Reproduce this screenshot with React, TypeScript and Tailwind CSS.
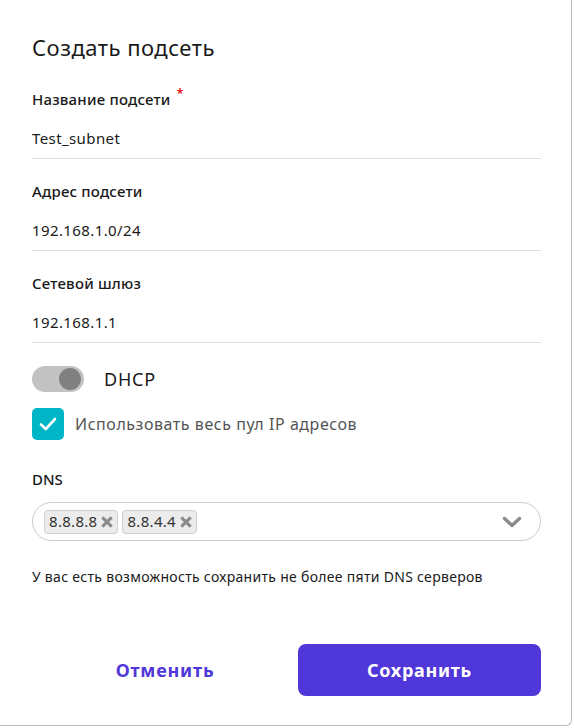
import React from "react";

const font = { fontFamily: '"Noto Sans", "Open Sans", sans-serif' };

function Field({ label, value, required }: { label: string; value: string; required?: boolean }) {
  return (
    <div className="flex flex-col">
      <div className="flex items-start h-[22px] text-[15px] font-medium text-[#1a1a1a] leading-[22px] tracking-[0.2px]">
        <span>{label}</span>
        {required && <span className="ml-[6px] -mt-[6px] text-[#e00000] text-[13px]">*</span>}
      </div>
      <div className="mt-[17px] h-[22px] text-[15px] leading-[22px] text-[#1a1a1a] tracking-[0.4px]">{value}</div>
      <div className="mt-[9px] h-px bg-[#dedede]" />
    </div>
  );
}

function Chip({ text }: { text: string }) {
  return (
    <div className="flex items-center h-[24px] pl-[4px] pr-[3px] bg-[#ececec] border border-[#cfcfcf] rounded-[4px] text-[15px] tracking-[0.3px] text-[#333]">
      <span>{text}</span>
      <svg width="14" height="14" viewBox="0 0 12 12" className="ml-[3px]">
        <path d="M2 2 L10 10 M10 2 L2 10" stroke="#8a8a8a" strokeWidth="2.6" strokeLinecap="butt" />
      </svg>
    </div>
  );
}

export default function App() {
  return (
    <div className="w-[574px] h-[728px] bg-white" style={font}>
      <div className="w-[572px] h-[726px] bg-white border-r border-b border-[#bdbdbd] rounded-br-[6px] px-[32px] pt-[32px] flex flex-col">
        <h1 className="text-[22px] leading-[30px] text-[#1a1a1a] font-normal tracking-[0.5px]">Создать подсеть</h1>
        <div className="mt-[26px] w-[509px] flex flex-col gap-[21px]">
          <Field label="Название подсети" value="Test_subnet" required />
          <Field label="Адрес подсети" value="192.168.1.0/24" />
          <Field label="Сетевой шлюз" value="192.168.1.1" />
        </div>
        <div className="mt-[22px] flex items-center h-[28px]">
          <div className="w-[52px] h-[26px] rounded-full bg-[#c2c2c2] flex items-center justify-end pr-[3px]">
            <div className="w-[22px] h-[22px] rounded-full bg-[#808080]" />
          </div>
          <span className="ml-[20px] text-[18px] text-[#1a1a1a] tracking-[0.8px]">DHCP</span>
        </div>
        <div className="mt-[15px] flex items-center">
          <div className="w-[32px] h-[32px] rounded-[5px] bg-[#00b6c6] flex items-center justify-center">
            <svg width="18" height="14" viewBox="0 0 18 14">
              <path d="M2 7.5 L6.8 12 L16 2" stroke="white" strokeWidth="2.6" fill="none" strokeLinecap="round" strokeLinejoin="round" />
            </svg>
          </div>
          <span className="ml-[11px] text-[16px] text-[#555] tracking-[0.55px]">Использовать весь пул IP адресов</span>
        </div>
        <div className="mt-[28px] text-[15px] font-medium text-[#1a1a1a] leading-[22px]">DNS</div>
        <div className="mt-[12px] w-[509px] h-[39px] rounded-full border border-[#cccccc] flex items-center pl-[11px] pr-[18px] gap-[4px]">
          <Chip text="8.8.8.8" />
          <Chip text="8.8.4.4" />
          <div className="flex-1" />
          <svg width="20" height="12" viewBox="0 0 20 12">
            <path d="M2.5 2.5 L10 9.5 L17.5 2.5" stroke="#8a8a8a" strokeWidth="3.4" fill="none" strokeLinecap="round" strokeLinejoin="round" />
          </svg>
        </div>
        <div className="mt-[26px] text-[14px] text-[#1a1a1a] leading-[20px] tracking-[0.3px]">
          У вас есть возможность сохранить не более пяти DNS серверов
        </div>
        <div className="mt-[57px] w-[509px] flex items-center">
          <button className="w-[266px] h-[52px] text-[18px] font-bold text-[#4f37d9] tracking-[0.8px]">Отменить</button>
          <button className="w-[243px] h-[52px] rounded-[8px] bg-[#4f37d9] text-white text-[18px] font-bold tracking-[0.7px]">
            Сохранить
          </button>
        </div>
      </div>
    </div>
  );
}
